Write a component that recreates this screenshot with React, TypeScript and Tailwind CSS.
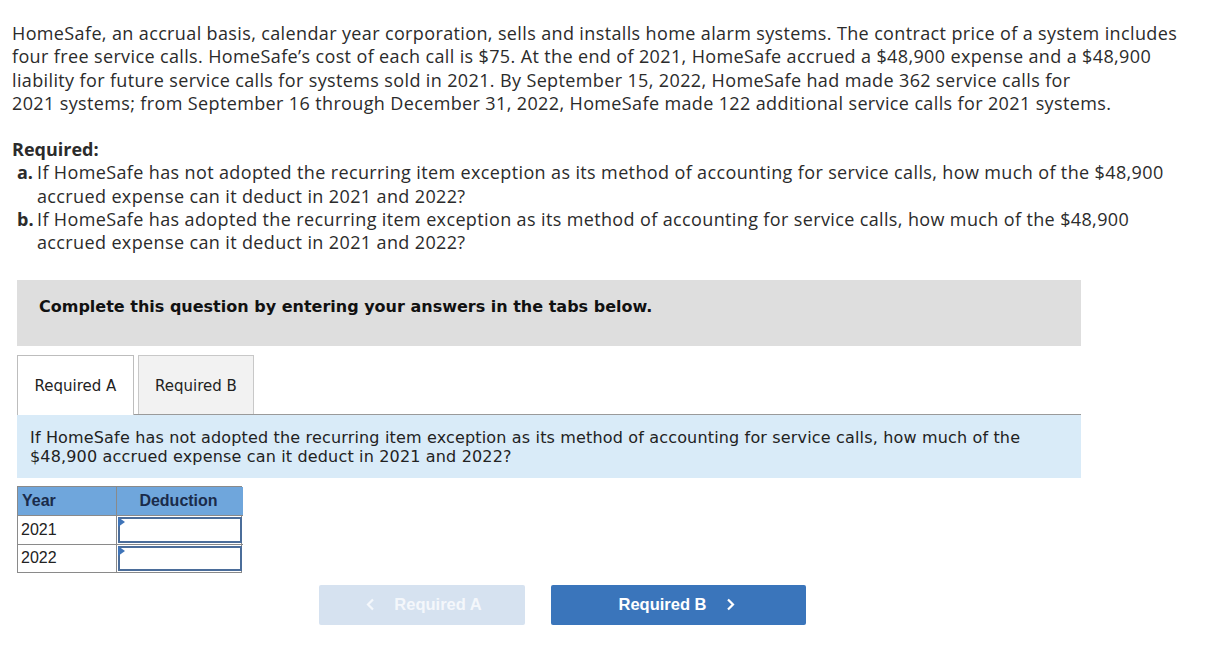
import React from "react";

export default function App() {
  return (
    <div className="w-[1207px] h-[647px] bg-white text-[#2b2b2b] overflow-hidden">
      <div className="pl-[12px] pt-[22px] text-[18px] leading-[23.3px] font-['Open_Sans',sans-serif] tracking-[0.37px]">
        <div>HomeSafe, an accrual basis, calendar year corporation, sells and installs home alarm systems. The contract price of a system includes</div>
        <div>four free service calls. HomeSafe’s cost of each call is $75. At the end of 2021, HomeSafe accrued a $48,900 expense and a $48,900</div>
        <div>liability for future service calls for systems sold in 2021. By September 15, 2022, HomeSafe had made 362 service calls for</div>
        <div>2021 systems; from September 16 through December 31, 2022, HomeSafe made 122 additional service calls for 2021 systems.</div>
        <div className="mt-[23px] font-bold tracking-normal">Required:</div>
        <div className="pl-[5px]">
          <div className="flex">
            <span className="font-bold w-[20px] tracking-normal">a.</span>
            <span>If HomeSafe has not adopted the recurring item exception as its method of accounting for service calls, how much of the $48,900</span>
          </div>
          <div className="pl-[20px]">accrued expense can it deduct in 2021 and 2022?</div>
          <div className="flex">
            <span className="font-bold w-[20px] tracking-normal">b.</span>
            <span>If HomeSafe has adopted the recurring item exception as its method of accounting for service calls, how much of the $48,900</span>
          </div>
          <div className="pl-[20px]">accrued expense can it deduct in 2021 and 2022?</div>
        </div>
      </div>

      <div className="ml-[17px] w-[1064px] mt-[25px] font-['DejaVu_Sans',Verdana,sans-serif]">
        <div className="h-[66px] bg-[#dedede] pl-[22px] pt-[16px] text-[16px] leading-[22px] font-bold text-[#111]">
          Complete this question by entering your answers in the tabs below.
        </div>
        <div className="mt-[9px] flex items-end gap-[4px] border-b border-[#9a9a9a] text-[15px] text-[#222]">
          <div className="h-[60px] w-[117px] border border-b-0 border-[#bdbdbd] bg-white flex items-center justify-center -mb-px pt-[3px]">
            Required A
          </div>
          <div className="h-[59px] w-[116px] border border-b-0 border-[#c8c8c8] bg-[#f2f2f2] flex items-center justify-center pt-[3px]">
            Required B
          </div>
        </div>
        <div className="h-[63px] bg-[#d9ebf8] pl-[13px] pt-[13px] text-[16px] leading-[19px] tracking-[0.16px] text-[#222]">
          <div>If HomeSafe has not adopted the recurring item exception as its method of accounting for service calls, how much of the</div>
          <div>$48,900 accrued expense can it deduct in 2021 and 2022?</div>
        </div>
      </div>

      <div className="ml-[17px] mt-[8px] w-[225px] font-['Liberation_Sans',Arial,sans-serif] text-[16px]">
        <div className="grid grid-cols-[99px_126px] border border-[#8a8a8a]">
          <div className="h-[28px] bg-[#6fa6dc] text-[#1a2b4a] font-bold flex items-center pl-[4px] border-r border-[#8a8a8a]">Year</div>
          <div className="h-[28px] bg-[#6fa6dc] text-[#1a2b4a] font-bold flex items-center justify-center pr-[3px]">Deduction</div>
          <div className="h-[29px] border-t border-r border-[#8a8a8a] flex items-center pl-[3px] text-[#222]">2021</div>
          <div className="h-[29px] border-t border-[#8a8a8a] relative">
            <div className="absolute inset-[1px] border-2 border-[#4b6d9a]" />
            <div className="absolute left-[1px] top-[1px] w-0 h-0 border-t-[5px] border-b-[5px] border-l-[7px] border-t-transparent border-b-transparent border-l-[#3f74b8]" />
          </div>
          <div className="h-[28px] border-t border-r border-[#8a8a8a] flex items-center pl-[3px] text-[#222]">2022</div>
          <div className="h-[28px] border-t border-[#8a8a8a] relative">
            <div className="absolute inset-[1px] border-2 border-[#4b6d9a]" />
            <div className="absolute left-[1px] top-[1px] w-0 h-0 border-t-[5px] border-b-[5px] border-l-[7px] border-t-transparent border-b-transparent border-l-[#3f74b8]" />
          </div>
        </div>
      </div>

      <div className="ml-[319px] mt-[12px] flex gap-[26px] font-['Liberation_Sans',Arial,sans-serif] text-[16.5px] font-bold text-white">
        <div className="w-[206px] h-[40px] rounded-[2px] bg-[#d6e2f0] flex items-center justify-center gap-[19px] pl-[4px] text-[#f4f7fb]">
          <svg width="9" height="13" viewBox="0 0 9 13"><path d="M7 1.5 L2 6.5 L7 11.5" stroke="#f4f7fb" strokeWidth="2.2" fill="none" /></svg>
          <span>Required A</span>
        </div>
        <div className="w-[255px] h-[40px] rounded-[2px] bg-[#3a75bb] flex items-center justify-center gap-[19px] pr-[4px]">
          <span>Required B</span>
          <svg width="9" height="13" viewBox="0 0 9 13"><path d="M2 1.5 L7 6.5 L2 11.5" stroke="#ffffff" strokeWidth="2.2" fill="none" /></svg>
        </div>
      </div>
    </div>
  );
}
